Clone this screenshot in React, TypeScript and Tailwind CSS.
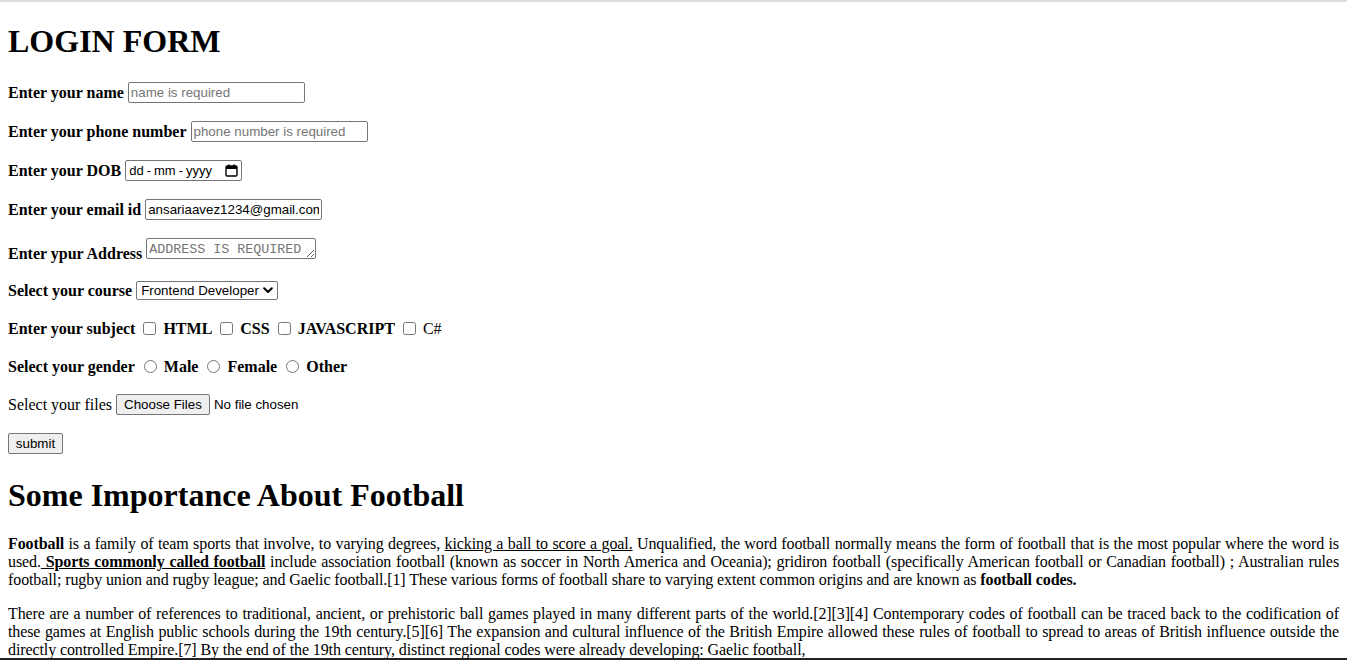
import React from 'react';

const control =
  "h-[21px] border border-[#767676] rounded-[2px] px-[2px] font-['Liberation_Sans',Arial,sans-serif] text-[13.33px] text-black placeholder:text-[#757575] outline-none";

const Label: React.FC<{ children: React.ReactNode; bold?: boolean }> = ({ children, bold = true }) => (
  <span className={`${bold ? 'font-bold' : ''} mr-[4px] whitespace-nowrap`}>{children}</span>
);

const CalendarIcon = () => (
  <svg width="13" height="13" viewBox="0 0 13 13" className="text-black">
    <rect x="1" y="2" width="11" height="10" rx="1.2" fill="none" stroke="currentColor" strokeWidth="1.4" />
    <rect x="1" y="2" width="11" height="3" fill="currentColor" />
    <rect x="3" y="0.5" width="1.6" height="2.5" fill="currentColor" />
    <rect x="8.4" y="0.5" width="1.6" height="2.5" fill="currentColor" />
  </svg>
);

const Chevron = () => (
  <svg width="10" height="7" viewBox="0 0 10 7">
    <path d="M1.2 1.3 L5 5 L8.8 1.3" fill="none" stroke="black" strokeWidth="2" strokeLinecap="round" strokeLinejoin="round" />
  </svg>
);

export default function App() {
  return (
    <div className="flex h-[660px] flex-col overflow-hidden bg-white text-black font-['Liberation_Serif','Times_New_Roman',serif] text-[16px] leading-[normal]">
      <div className="h-[2px] bg-[#dedede]" />
      <div className="min-h-0 flex-1 overflow-hidden px-2">
        <h1 className="mt-[21px] mb-[22px] text-[32px] font-bold leading-[37px]">LOGIN FORM</h1>

        <form className="flex flex-col">
          {/* name */}
          <div className="flex h-[21px] items-center">
            <Label>Enter your name</Label>
            <input type="text" placeholder="name is required" className={`${control} w-[177px]`} />
          </div>

          {/* phone */}
          <div className="mt-[18px] flex h-[21px] items-center">
            <Label>Enter your phone number</Label>
            <input type="tel" placeholder="phone number is required" className={`${control} w-[177px]`} />
          </div>

          {/* dob */}
          <div className="mt-[18px] flex h-[21px] items-center">
            <Label>Enter your DOB</Label>
            <div className={`${control} flex w-[117px] items-center justify-between pl-[3px] pr-[3px]`}>
              <span className="flex gap-[3px] text-[13px]">
                <span>dd</span>
                <span>-</span>
                <span>mm</span>
                <span>-</span>
                <span>yyyy</span>
              </span>
              <CalendarIcon />
            </div>
          </div>

          {/* email */}
          <div className="mt-[18px] flex h-[21px] items-center">
            <Label>Enter your email id</Label>
            <input type="email" defaultValue="ansariaavez1234@gmail.com" className={`${control} w-[177px]`} />
          </div>

          {/* address */}
          <div className="mt-[18px] flex h-[21px] items-end">
            <span className="mb-[-4px] mr-[4px] font-bold whitespace-nowrap">Enter ypur Address</span>
            <textarea
              rows={1}
              placeholder="ADDRESS IS REQUIRED"
              className="h-[21px] w-[170px] border border-[#767676] rounded-[2px] px-[2px] pt-[3px] pb-0 font-['Liberation_Mono','Courier_New',monospace] text-[13.33px] leading-[15px] placeholder:text-[#757575] outline-none"
            />
          </div>

          {/* course */}
          <div className="mt-[21px] flex h-[21px] items-center">
            <Label>Select your course</Label>
            <div className="flex h-[19px] w-[142px] items-center justify-between border border-[#767676] rounded-[2px] pl-[4px] pr-[4px] font-['Liberation_Sans',Arial,sans-serif] text-[13.33px]">
              <span>Frontend Developer</span>
              <Chevron />
            </div>
          </div>

          {/* subjects */}
          <div className="mt-[17px] flex h-[21px] items-center">
            <span className="font-bold whitespace-nowrap">Enter your subject</span>
            <input type="checkbox" className="ml-[8px] mr-[7px] h-[13px] w-[13px]" />
            <span className="font-bold">HTML</span>
            <input type="checkbox" className="ml-[8px] mr-[7px] h-[13px] w-[13px]" />
            <span className="font-bold">CSS</span>
            <input type="checkbox" className="ml-[8px] mr-[7px] h-[13px] w-[13px]" />
            <span className="font-bold">JAVASCRIPT</span>
            <input type="checkbox" className="ml-[8px] mr-[7px] h-[13px] w-[13px]" />
            <span>C#</span>
          </div>

          {/* gender */}
          <div className="mt-[17px] flex h-[21px] items-center">
            <span className="font-bold whitespace-nowrap">Select your gender</span>
            <input type="radio" name="gender" className="ml-[9px] mr-[7px] h-[13px] w-[13px]" />
            <span className="font-bold">Male</span>
            <input type="radio" name="gender" className="ml-[9px] mr-[7px] h-[13px] w-[13px]" />
            <span className="font-bold">Female</span>
            <input type="radio" name="gender" className="ml-[9px] mr-[7px] h-[13px] w-[13px]" />
            <span className="font-bold">Other</span>
          </div>

          {/* files */}
          <div className="mt-[17px] flex h-[21px] items-center">
            <Label bold={false}>Select your files</Label>
            <button
              type="button"
              className="h-[21px] w-[94px] border border-[#767676] rounded-[2px] bg-[#efefef] font-['Liberation_Sans',Arial,sans-serif] text-[13.33px]"
            >
              Choose Files
            </button>
            <span className="ml-[4px] font-['Liberation_Sans',Arial,sans-serif] text-[13.33px]">No file chosen</span>
          </div>

          {/* submit */}
          <div className="mt-[18px] flex h-[21px] items-center">
            <button
              type="button"
              className="h-[21px] w-[55px] border border-[#767676] rounded-[2px] bg-[#efefef] font-['Liberation_Sans',Arial,sans-serif] text-[13.33px]"
            >
              submit
            </button>
          </div>
        </form>

        <h1 className="mt-[23px] mb-[21px] text-[32px] font-bold leading-[37px]">Some Importance About Football</h1>

        <p className="mb-[16px] text-justify tracking-[-0.1px]">
          <b>Football</b> is a family of team sports that involve, to varying degrees, <u>kicking a ball to score a goal.</u>{' '}
          Unqualified, the word football normally means the form of football that is the most popular where the word is used.
          <b>
            <u> Sports commonly called football</u>
          </b>{' '}
          include association football (known as soccer in North America and Oceania); gridiron football (specifically American
          football or Canadian football) ; Australian rules football; rugby union and rugby league; and Gaelic football.[1] These
          various forms of football share to varying extent common origins and are known as <b>football codes.</b>
        </p>

        <p className="text-justify tracking-[-0.1px]">
          There are a number of references to traditional, ancient, or prehistoric ball games played in many different parts of the
          world.[2][3][4] Contemporary codes of football can be traced back to the codification of these games at English public
          schools during the 19th century.[5][6] The expansion and cultural influence of the British Empire allowed these rules of
          football to spread to areas of British influence outside the directly controlled Empire.[7] By the end of the 19th
          century, distinct regional codes were already developing: Gaelic football,
        </p>
      </div>
      <div className="h-[2px] bg-[#222222]" />
    </div>
  );
}
